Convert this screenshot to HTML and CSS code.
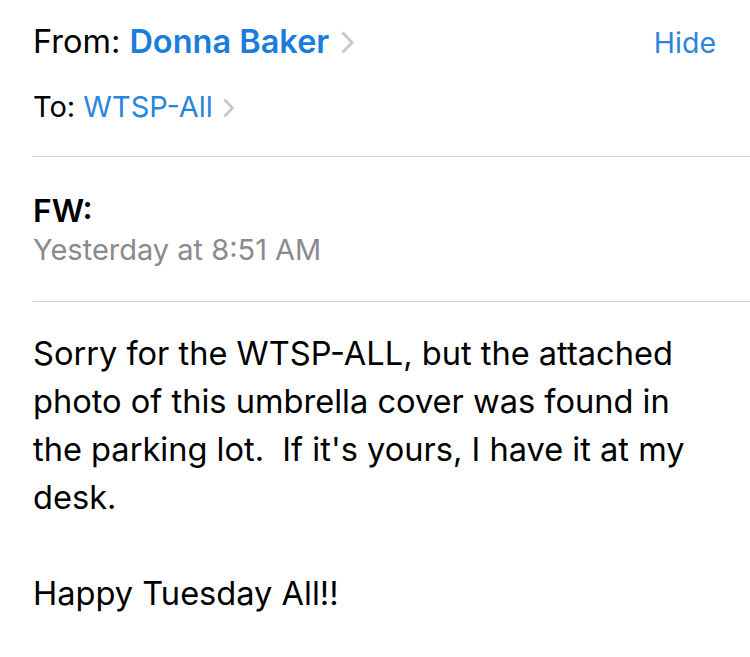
FILE: index.html
```html
<!DOCTYPE html>
<html>
<head>
<meta charset="utf-8">
<link rel="stylesheet" href="styles.css">
</head>
<body>
<div class="mail">
  <div class="head">
    <div class="row from-row">
      <div class="addr"><span class="label">From: </span><span class="name">Donna Baker</span><svg class="chev" width="15" height="25" viewBox="0 0 15 25"><path d="M2.5 2.5 L12 12.5 L2.5 22.5" fill="none" stroke="#c7c7cc" stroke-width="3"/></svg></div>
      <span class="hide">Hide</span>
    </div>
    <div class="row to-row">
      <div class="addr"><span class="label">To: </span><span class="to">WTSP-All</span><svg class="chev small" width="13" height="22" viewBox="0 0 13 22"><path d="M2.5 2.5 L10.5 11 L2.5 19.5" fill="none" stroke="#c7c7cc" stroke-width="2.7"/></svg></div>
    </div>
  </div>
  <div class="subject">
    <div class="fw">FW:</div>
    <div class="date">Yesterday at 8:51 AM</div>
  </div>
  <div class="body">
    <p>Sorry for the WTSP-ALL, but the attached photo of this umbrella cover was found in the parking lot.&nbsp; If it's yours, I have it at my desk.</p>
    <p class="blank">&nbsp;</p>
    <p>Happy Tuesday All!!</p>
  </div>
</div>
</body>
</html>
```
FILE: styles.css
```css
html, body {
  margin: 0;
  padding: 0;
  background: #ffffff;
}
body {
  font-family: Inter, "Liberation Sans", Arial, sans-serif;
  color: #000;
}
.mail {
  padding-left: 33px;
}
.head {
  padding-top: 22px;
  padding-bottom: 32px;
  border-bottom: 1px solid #d2d2d2;
}
.row {
  display: flex;
  align-items: baseline;
  justify-content: space-between;
  padding-right: 34px;
}
.from-row {
  font-size: 32.5px;
  line-height: 40px;
}
.to-row {
  margin-top: 27px;
  font-size: 29px;
  line-height: 34px;
}
.addr {
  white-space: pre;
}
.chev {
  vertical-align: -2px;
  margin-left: 11px;
}
.chev.small {
  margin-left: 9px;
}
.name {
  color: #1a7ddb;
  font-weight: 600;
}
.to {
  color: #2a85dc;
}
.hide {
  color: #2a85dc;
  font-size: 28.5px;
}
.subject {
  padding-top: 35px;
  padding-bottom: 31px;
  border-bottom: 1px solid #d2d2d2;
}
.fw {
  font-size: 31.8px;
  font-weight: 600;
  line-height: 38px;
}
.date {
  font-size: 29px;
  color: #8a8a8e;
  line-height: 40px;
}
.body {
  padding-top: 27px;
  padding-right: 50px;
  font-size: 32.6px;
  line-height: 48px;
}
.body p {
  margin: 0;
}
```
